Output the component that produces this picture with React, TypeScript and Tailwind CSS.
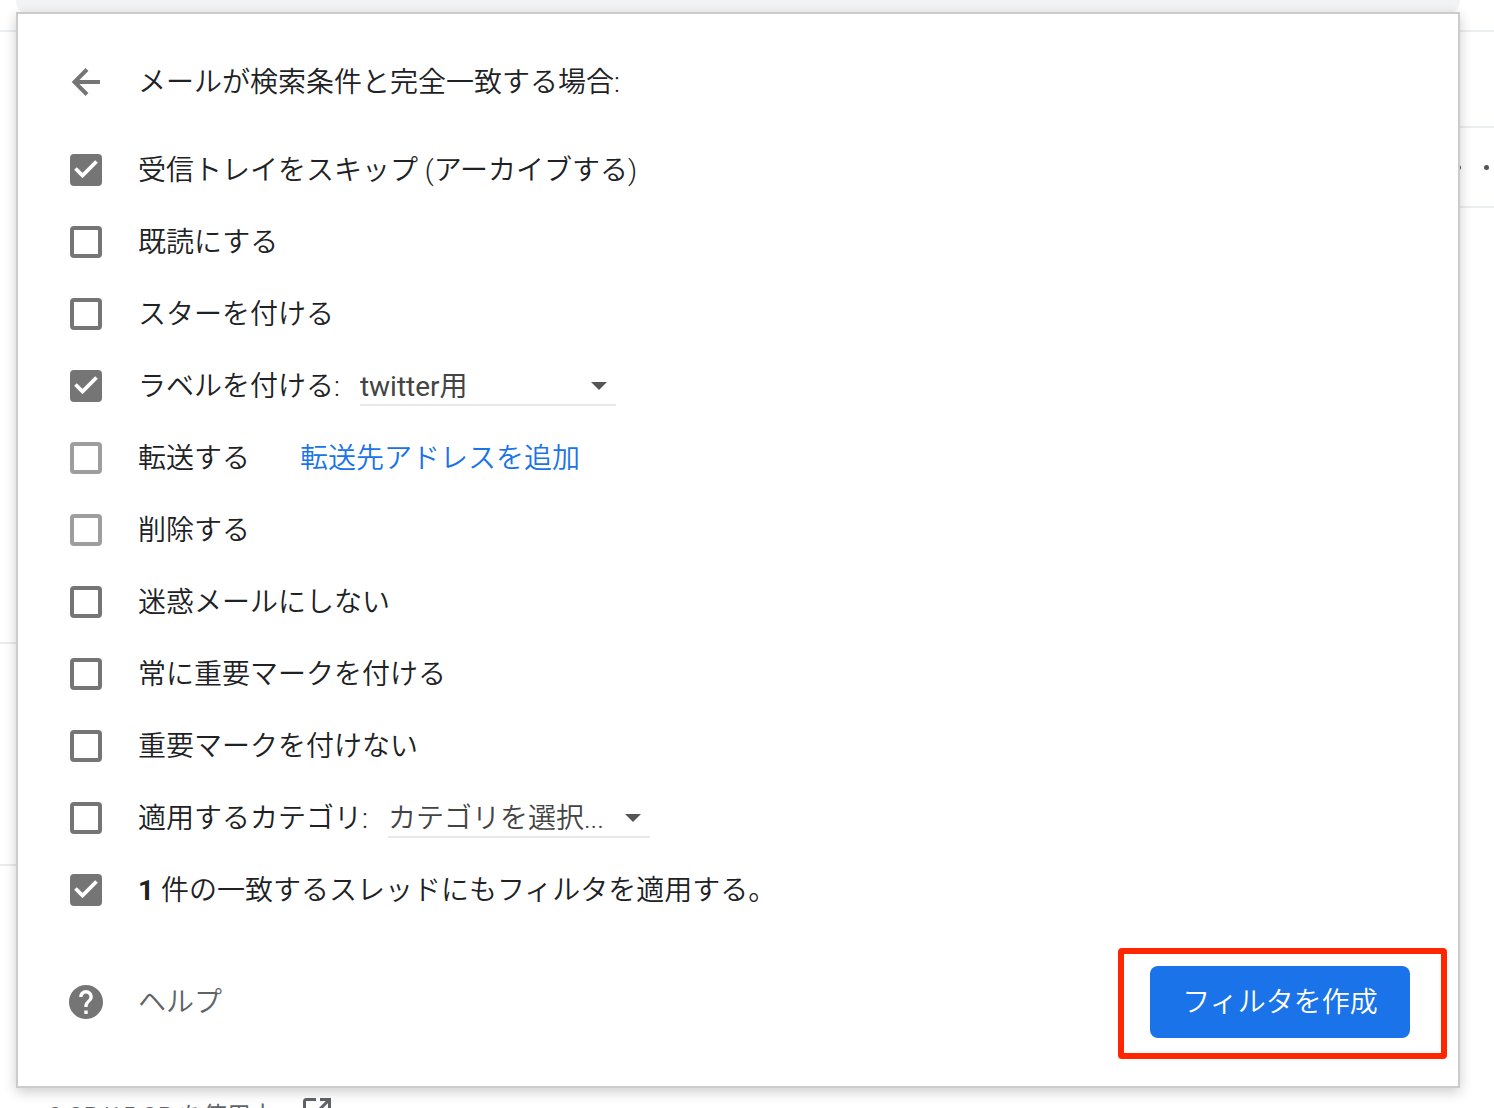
import { useState, type ReactNode } from "react";

type CheckRowProps = {
  id: string;
  label: ReactNode;
  defaultChecked?: boolean;
  disabled?: boolean;
  children?: ReactNode;
};

function CheckRow({ id, label, defaultChecked = false, disabled = false, children }: CheckRowProps) {
  const [checked, setChecked] = useState(defaultChecked);
  return (
    <li className="flex h-18 items-center">
      <span className="grid size-8 shrink-0">
        <input
          id={id}
          type="checkbox"
          checked={checked}
          disabled={disabled}
          onChange={(e) => setChecked(e.target.checked)}
          className="col-start-1 row-start-1 size-8 appearance-none rounded border-4 border-[#757575] checked:bg-[#757575] disabled:border-[#9e9e9e]"
        />
        {checked && (
          <svg viewBox="0 0 32 32" className="pointer-events-none col-start-1 row-start-1 size-8" aria-hidden="true">
            <path d="M5.500 14.500L12.500 21.500L26.500 7.500" fill="none" stroke="#fff" strokeWidth="3.800" />
          </svg>
        )}
      </span>
      <label htmlFor={id} className="ml-9 pt-0.5 whitespace-nowrap">
        {label}
      </label>
      {children}
    </li>
  );
}

type DropdownProps = { label: string; options: string[]; className: string };

function Dropdown({ label, options, className }: DropdownProps) {
  return (
    <span className="ml-5 grid items-center">
      <select
        aria-label={label}
        className={`col-start-1 row-start-1 h-10 appearance-none border-b-2 border-[#e8e8e8] bg-transparent pt-px text-[#444] ${className}`}
      >
        {options.map((o) => (
          <option key={o}>{o}</option>
        ))}
      </select>
      <svg
        viewBox="0 0 16 8"
        className="pointer-events-none col-start-1 row-start-1 mr-[9px] h-2 w-4 justify-self-end"
        aria-hidden="true"
      >
        <path d="M0 0H16L8 8Z" fill="#555" />
      </svg>
    </span>
  );
}

function MailPage() {
  return (
    <div className="flex h-full flex-col text-2xl text-[#5f6368]">
      <header className="h-8 shrink-0 border-b-2 border-[#eceff1]">
        <div className="mr-[34px] ml-4 h-4 rounded-b-2xl bg-[#f1f3f4]" />
      </header>
      <div className="flex justify-between">
        <div className="w-96 shrink-0">
          <div className="h-[612px] border-b-2 border-[#ececec]" />
          <div className="h-[222px] border-b-2 border-[#ececec]" />
          <div className="mt-[232px] ml-12 flex items-start whitespace-nowrap">
            <span className="pt-0.5 leading-8">0 GB/15 GB を使用中</span>
            <svg viewBox="0 0 28 28" className="ml-7 size-7" fill="none" stroke="#5f6368" strokeWidth="3" aria-hidden="true">
              <path d="M13 1.500H3.500Q1.500 1.500 1.500 3.500V26.500H26.500V15" />
              <path d="M17 1.500H26.500V11M26.500 1.500L10 18" />
            </svg>
          </div>
        </div>
        <div className="w-24 shrink-0">
          <div className="h-24 border-b-2 border-[#eceff1]" />
          <div className="flex h-20 items-center justify-end gap-[23px] border-b-2 border-[#eceff1] pr-[5px]">
            <span className="size-[5px] rounded-full bg-[#555]" />
            <span className="size-[5px] rounded-full bg-[#555]" />
          </div>
        </div>
      </div>
    </div>
  );
}

export default function App() {
  return (
    <main className="relative h-screen overflow-hidden bg-white font-[Roboto,'Noto_Sans_CJK_JP',sans-serif]">
      <MailPage />
      <section
        role="dialog"
        aria-labelledby="filter-title"
        className="absolute top-3 right-[34px] left-4 border-2 border-[#ccc] bg-white pt-8 pr-12 pb-12 pl-[52px] text-[28px] leading-10 font-[350] text-[#202124] shadow-[0_4px_12px_rgba(0,0,0,0.2)]"
      >
        <div className="flex h-18 items-center">
          <button type="button" aria-label="戻る" className="size-8">
            <svg viewBox="0 0 32 32" className="size-8" fill="none" stroke="#757575" strokeWidth="4" aria-hidden="true">
              <path d="M30 16H5M17 3.500L4.500 16L17 28.500" />
            </svg>
          </button>
          <h1 id="filter-title" className="ml-9 pt-0.5 whitespace-nowrap">
            メールが検索条件と完全一致する場合:
          </h1>
        </div>
        <ul className="mt-4">
          <CheckRow id="skip" defaultChecked label="受信トレイをスキップ (アーカイブする)" />
          <CheckRow id="read" label="既読にする" />
          <CheckRow id="star" label="スターを付ける" />
          <CheckRow id="label" defaultChecked label="ラベルを付ける:">
            <Dropdown label="ラベル" options={["twitter用"]} className="w-64 font-normal" />
          </CheckRow>
          <CheckRow id="forward" disabled label="転送する">
            <a href="#forwarding" className="ml-[50px] pt-0.5 text-[#1a73e8]">
              転送先アドレスを追加
            </a>
          </CheckRow>
          <CheckRow id="delete" disabled label="削除する" />
          <CheckRow id="spam" label="迷惑メールにしない" />
          <CheckRow id="important" label="常に重要マークを付ける" />
          <CheckRow id="unimportant" label="重要マークを付けない" />
          <CheckRow id="category" label="適用するカテゴリ:">
            <Dropdown label="カテゴリ" options={["カテゴリを選択..."]} className="w-[262px]" />
          </CheckRow>
          <CheckRow
            id="apply"
            defaultChecked
            label={
              <>
                <b className="font-bold">1</b> 件の一致するスレッドにもフィルタを適用する。
              </>
            }
          />
        </ul>
        <div className="mt-10 flex items-center justify-between">
          <a href="#help" className="flex items-center gap-9 text-[#5f6368]">
            <svg viewBox="2.600 2.600 18.800 18.800" className="size-8 overflow-visible" aria-hidden="true">
              <path
                fill="#757575"
                d="M12 2C6.480 2 2 6.480 2 12s4.480 10 10 10 10-4.480 10-10S17.520 2 12 2zm1 17h-2v-2h2v2zm2.070-7.750l-.9.920C13.450 12.900 13 13.500 13 15h-2v-.5c0-1.100.450-2.100 1.170-2.830l1.240-1.260c.370-.360.590-.860.590-1.410 0-1.100-.9-2-2-2s-2 .9-2 2H8c0-2.210 1.790-4 4-4s4 1.790 4 4c0 .880-.360 1.680-.930 2.250z"
              />
            </svg>
            <span className="pt-0.5">ヘルプ</span>
          </a>
          <div className="relative">
            <button type="button" className="h-18 w-65 rounded-lg bg-[#1a73e8] pt-0.5 text-white">
              フィルタを作成
            </button>
            <span className="pointer-events-none absolute -top-[18px] -right-[37px] -bottom-[21px] -left-8 rounded border-6 border-[#ff2600]" />
          </div>
        </div>
      </section>
    </main>
  );
}
